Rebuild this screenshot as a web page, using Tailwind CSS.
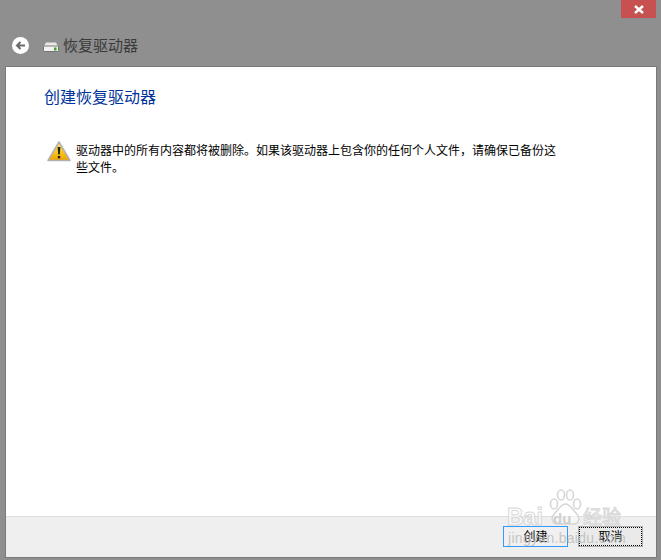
<!DOCTYPE html>
<html lang="zh-CN">
<head>
    <meta charset="UTF-8">
    <title>恢复驱动器</title>
    <script src="https://cdn.jsdelivr.net/npm/@tailwindcss/browser@4"></script>
</head>
<body class="bg-[#8f8f8f]">
    <div class="relative w-[661px] h-[560px] overflow-hidden flex flex-col font-['Liberation_Sans','Noto_Sans_CJK_SC',sans-serif]">
        <!-- Title bar -->
        <div class="flex justify-end pr-[5px] h-[18px] shrink-0">
            <div class="w-[35px] h-[18px] bg-[#c75050] flex items-center justify-center">
                <svg width="10" height="9" viewBox="0 0 10 9"><path d="M1 1 L9 8 M9 1 L1 8" stroke="#fff" stroke-width="2.4"/></svg>
            </div>
        </div>
        <!-- Header -->
        <div class="flex items-center h-[49px] shrink-0 pl-[12px] pt-[5px]">
            <div class="w-[17px] h-[17px] rounded-full bg-white flex items-center justify-center">
                <svg width="11" height="11" viewBox="0 0 11 11" fill="none"><path d="M10 5.5 H2 M5.5 2 L2 5.5 L5.5 9" stroke="#6b6b6b" stroke-width="2"/></svg>
            </div>
            <svg class="ml-[14px] mt-[4px]" width="16" height="10" viewBox="0 0 16 10">
                <path d="M3 0.5 H13 L15.5 5 H0.5 Z" fill="#e8e8e8"/>
                <rect x="0.5" y="4" width="15" height="5.5" rx="1" fill="#f2f2f2" stroke="#5f5f5f" stroke-width="0.8"/>
                <rect x="11" y="5.5" width="2.5" height="3" fill="#3fa81c"/>
            </svg>
            <span class="ml-[4px] text-[15px] leading-none text-[#3a3a3a]">恢复驱动器</span>
        </div>
        <!-- Panel -->
        <div class="ml-[6px] mr-[5px] mb-[3px] flex-1 flex flex-col bg-white shadow-[0_0_0_1px_#7a7a7a]">
            <div class="flex-1 pl-[38px] pt-[21px]">
                <h1 class="text-[16px] leading-[20px] font-normal text-[#003399]">创建恢复驱动器</h1>
                <div class="flex mt-[35px]">
                    <svg class="ml-[3px] -mt-[2px] shrink-0" width="24" height="21" viewBox="0 0 24 21">
                        <defs><linearGradient id="warn" x1="0" y1="0" x2="0" y2="1"><stop offset="0" stop-color="#ffe98a"/><stop offset="0.5" stop-color="#fbc81e"/><stop offset="1" stop-color="#eda200"/></linearGradient></defs>
                        <path d="M12 1 L23 19.5 H1 Z" fill="url(#warn)" stroke="#b0b0b0" stroke-width="1.5" stroke-linejoin="round"/>
                        <path d="M10.6 6 H13.4 L12.8 13.5 H11.2 Z" fill="#222"/>
                        <rect x="10.8" y="15" width="2.4" height="2.4" fill="#222"/>
                    </svg>
                    <p class="ml-[5px] w-[490px] text-[12px] leading-[17px] text-black">驱动器中的所有内容都将被删除。如果该驱动器上包含你的任何个人文件，请确保已备份这些文件。</p>
                </div>
            </div>
            <!-- Footer -->
            <div class="h-[41px] shrink-0 bg-[#efefef] border-t border-[#dfdfdf] flex justify-end items-start gap-[10px] pt-[9px] pr-[13px]">
                <button class="w-[65px] h-[21px] bg-[#f0f0f0] border border-[#3399ff] text-[12px] leading-none text-black">创建</button>
                <button class="w-[65px] h-[21px] bg-[#eaeaea] border border-[#acacac] text-[12px] leading-none text-black outline-1 outline-dotted outline-black -outline-offset-2">取消</button>
            </div>
        </div>
        <!-- Watermark -->
        <div class="absolute left-[506px] top-[488px] w-[120px] h-[60px] pointer-events-none">
            <svg class="absolute left-[43px] top-[1px]" width="33" height="36" viewBox="0 0 33 36" fill="#ffffff" fill-opacity="0.5" stroke="#d6d6d6" stroke-width="1.6">
                <ellipse cx="5" cy="15" rx="3.5" ry="5"/>
                <ellipse cx="12" cy="6" rx="3.5" ry="5"/>
                <ellipse cx="21" cy="6" rx="3.5" ry="5"/>
                <ellipse cx="28" cy="15" rx="3.5" ry="5"/>
                <path d="M16.5 15 C12 15 10 20 6 24 C1 29 3 35 9 35 C13 35 20 35 24 35 C30 35 32 29 27 24 C23 20 21 15 16.5 15 Z"/>
            </svg>
            <span class="absolute left-[1px] top-[18px] text-[23px] leading-none font-bold text-white/60 [-webkit-text-stroke:1px_#d8d8d8]">Bai</span>
            <span class="absolute left-[47px] top-[23px] text-[15px] leading-none font-bold text-[#cfcfcf]">du</span>
            <span class="absolute left-[77px] top-[20px] text-[19px] leading-none text-white/60 [-webkit-text-stroke:1px_#d8d8d8]">经验</span>
            <span class="absolute left-[2px] top-[43px] text-[14px] leading-none text-[#b8b8b8]/80 tracking-[0.3px]">jingyan.baidu.com</span>
        </div>
    </div>
</body>
</html>
